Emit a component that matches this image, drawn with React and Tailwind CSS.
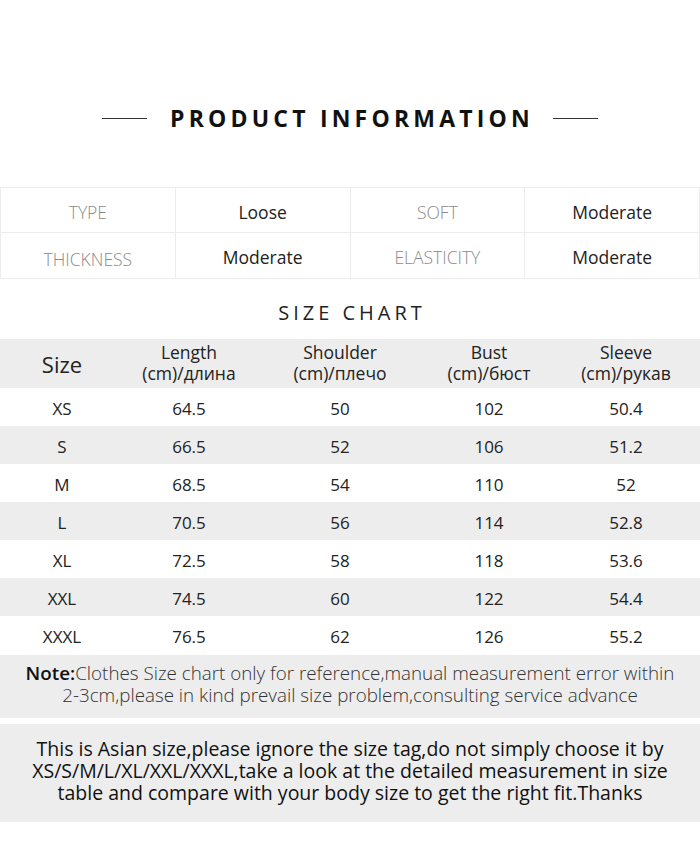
import React from 'react';

const info = [
  ['TYPE', 'Loose', 'SOFT', 'Moderate'],
  ['THICKNESS', 'Moderate', 'ELASTICITY', 'Moderate'],
];

const sizes = [
  ['XS', '64.5', '50', '102', '50.4'],
  ['S', '66.5', '52', '106', '51.2'],
  ['M', '68.5', '54', '110', '52'],
  ['L', '70.5', '56', '114', '52.8'],
  ['XL', '72.5', '58', '118', '53.6'],
  ['XXL', '74.5', '60', '122', '54.4'],
  ['XXXL', '76.5', '62', '126', '55.2'],
];

const cols = 'grid grid-cols-[124px_130px_172px_126px_148px]';

const App = () => {
  return (
    <div className="w-[700px] h-[854px] bg-white text-[#222] font-['Open_Sans',sans-serif] overflow-hidden">
      {/* title */}
      <div className="flex justify-center gap-[19px] pt-[101px] h-[187px] items-start">
        <div className="w-[45px] h-px bg-[#333] mt-[17px]" />
        <h1 className="text-[23px] font-bold tracking-[4.2px] text-[#111] leading-[34px] ml-1">
          PRODUCT INFORMATION
        </h1>
        <div className="w-[45px] h-px bg-[#333] mt-[17px]" />
      </div>

      {/* info table */}
      <div className="border-t border-b border-l border-[#ececec]">
        {info.map((row, i) => (
          <div
            key={i}
            className={`grid grid-cols-4 h-[45px] ${i === 0 ? 'border-b border-[#ececec]' : ''}`}
          >
            {row.map((cell, j) => (
              <div
                key={j}
                className={`flex items-center justify-center border-r border-[#ececec] text-[17.5px] ${
                  j % 2 === 0 ? 'text-[#8a8a8a] font-light' : 'text-[#222]'
                } ${j === 0 && i === 1 ? 'pt-[8px]' : 'pt-[4px]'}`}
              >
                {cell}
              </div>
            ))}
          </div>
        ))}
      </div>

      {/* size chart */}
      <div className="h-[60px] flex items-center justify-center pt-[8px]">
        <h2 className="text-[20px] tracking-[4px] text-[#222] ml-1">SIZE CHART</h2>
      </div>

      <div className={`${cols} h-[49px] bg-[#ededed] items-center text-center`}>
        <div className="text-[22px] pt-[2px]">Size</div>
        <div className="text-[17.5px] leading-[21px] -mt-[2px]">Length<br />(cm)/длина</div>
        <div className="text-[17.5px] leading-[21px] -mt-[2px]">Shoulder<br />(cm)/плечо</div>
        <div className="text-[17.5px] leading-[21px] -mt-[2px]">Bust<br />(cm)/бюст</div>
        <div className="text-[17.5px] leading-[21px] -mt-[2px]">Sleeve<br />(cm)/рукав</div>
      </div>
      {sizes.map((row, i) => (
        <div
          key={row[0]}
          className={`${cols} h-[38px] items-center text-center text-[17px] pt-[4px] ${
            i % 2 === 1 ? 'bg-[#ededed]' : 'bg-white'
          }`}
        >
          {row.map((v, j) => (
            <div key={j}>{v}</div>
          ))}
        </div>
      ))}

      {/* notes */}
      <div className="mt-[1px] h-[63px] bg-[#ededed] flex flex-col items-center justify-center pb-[5px] text-[18.8px] leading-[22px] text-[#333] font-light text-center">
        <p>
          <span className="font-semibold text-[#111]">Note:</span>Clothes Size chart only for reference,manual measurement error within
        </p>
        <p>2-3cm,please in kind prevail size problem,consulting service advance</p>
      </div>
      <div className="mt-[6px] h-[98px] bg-[#ededed] flex flex-col items-center justify-center pb-[5px] text-[19.5px] leading-[22px] text-[#111] text-center">
        <p>This is Asian size,please ignore the size tag,do not simply choose it by</p>
        <p>XS/S/M/L/XL/XXL/XXXL,take a look at the detailed measurement in size</p>
        <p>table and compare with your body size to get the right fit.Thanks</p>
      </div>
    </div>
  );
};

export default App;
